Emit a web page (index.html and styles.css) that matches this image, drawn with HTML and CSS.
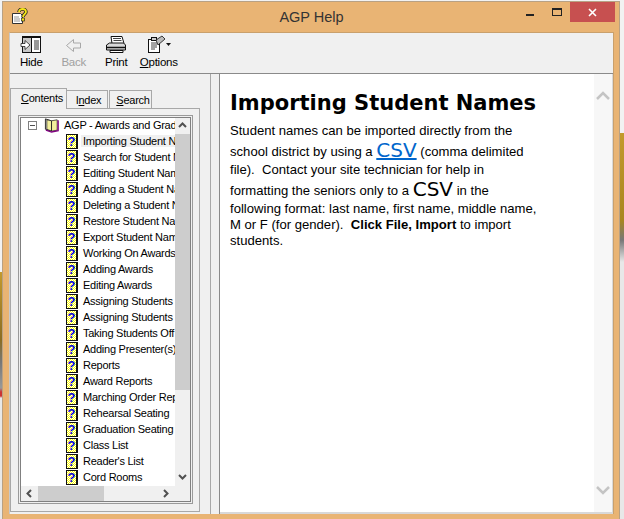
FILE: index.html
```html
<!DOCTYPE html>
<html lang="en">
<head>
    <meta charset="UTF-8">
    <title>AGP Help</title>
    <link rel="stylesheet" href="styles.css">
</head>
<body>
    <div class="window">
        <div class="titlebar">
            <div class="title-left">
                <svg class="app-icon" width="16" height="16" viewBox="0 0 16 16">
                    <path d="M.5 5.500h8l2 2v8H.5z" fill="#fff" stroke="#333"/>
                    <path d="M2 9h5M2 11h6M2 13h6" stroke="#999"/>
                    <path d="M7 4c0-4 7-4 7 0 0 2-3 2-3 5" fill="none" stroke="#222" stroke-width="3.400"/>
                    <path d="M7 4c0-4 7-4 7 0 0 2-3 2-3 5" fill="none" stroke="#f5e616" stroke-width="1.800"/>
                    <rect x="9.500" y="10" width="3" height="3" fill="#f5e616" stroke="#222" stroke-width=".7"/>
                </svg>
            </div>
            <div class="title">AGP Help</div>
            <div class="title-right">
                <svg class="min-icon" width="8" height="2"><rect width="8" height="2" fill="#222"/></svg>
                <svg class="max-icon" width="10" height="8"><rect x=".5" y=".5" width="9" height="7" fill="none" stroke="#222"/><rect width="10" height="2" fill="#222"/></svg>
                <div class="close">
                    <svg width="9" height="9" viewBox="0 0 9 9"><path d="M1 1l7 7M8 1l-7 7" stroke="#fff" stroke-width="1.600"/></svg>
                </div>
            </div>
        </div>
        <div class="client">
            <div class="toolbar">
                <div class="tool">
                    <svg width="22" height="20" viewBox="0 0 22 20">
                        <rect x="2.500" y="1.500" width="18" height="16" fill="#fff" stroke="#111"/>
                        <rect x="2" y="1" width="19" height="2" fill="#111"/>
                        <rect x="3" y="3" width="8" height="14" fill="#c8c8c8"/>
                        <path d="M11.500 2v16" stroke="#111"/>
                        <path d="M14 6h5M14 8h5M14 10h5M14 12h5M14 14h5" stroke="#333"/>
                        <path d="M1 8.500h4V5.500l5 4.500-5 4.500v-3H1z" fill="#fff" stroke="#222" stroke-width=".8"/>
                    </svg>
                    <span>Hide</span>
                </div>
                <div class="tool disabled">
                    <svg width="22" height="20" viewBox="0 0 22 20">
                        <path d="M3.500 10.500l7-6v3.500h7v5h-7v3.500z" fill="none" stroke="#a8a8a8"/>
                    </svg>
                    <span>Back</span>
                </div>
                <div class="tool">
                    <svg width="22" height="20" viewBox="0 0 22 20">
                        <path d="M6 1.500h11l2 7H7z" fill="#fff" stroke="#111"/>
                        <path d="M8 3.500h8M8.500 5.500h8" stroke="#444"/>
                        <path d="M1.500 10l3-2h14l2 2v5h-19z" fill="#d8d8d8" stroke="#111"/>
                        <path d="M2 12.500h18" stroke="#111" stroke-width="1.500"/>
                        <path d="M5 15.500h13v2H5z" fill="#fff" stroke="#111"/>
                    </svg>
                    <span>Print</span>
                </div>
                <div class="tool">
                    <svg width="26" height="20" viewBox="0 0 26 20">
                        <rect x="2.500" y="4.500" width="11" height="13" fill="#fff" stroke="#111"/>
                        <rect x="5.500" y="2.500" width="5" height="3" fill="#ccc" stroke="#111"/>
                        <path d="M5 8h6M5 10h6M5 12h6M5 14h4" stroke="#444"/>
                        <path d="M10 5l6-4 3 3-7 6z" fill="#bbb" stroke="#111" stroke-width=".8"/>
                        <path d="M20 8h5l-2.500 3z" fill="#111"/>
                    </svg>
                    <span><u>O</u>ptions</span>
                </div>
            </div>
            <div class="panes">
                <div class="nav">
                    <div class="tabs">
                        <div class="tab active"><u>C</u>ontents</div>
                        <div class="tab index">I<u>n</u>dex</div>
                        <div class="tab search"><u>S</u>earch</div>
                    </div>
                    <div class="tab-body">
                        <div class="tree">
                            <div class="tree-view">
                                <div class="tree-list">
                                    <div class="tree-root">
                                        <span class="minus"></span>
                                        <svg class="book" width="16" height="16" viewBox="0 0 17 16">
                                            <path d="M1.500 1.500l6 2v11l-6-2z" fill="#fff" stroke="#222"/>
                                            <path d="M3 2.500v10l5 2 6-1v-11l-6 1z" fill="#f3ef9c" stroke="#222" stroke-width=".8"/>
                                            <path d="M8 3.500v11" stroke="#222"/>
                                            <path d="M2 13.500l6 2 7-1.500V3" fill="none" stroke="#800080" stroke-width="1.500"/>
                                        </svg>
                                        <span class="label">AGP - Awards and Graduation</span>
                                    </div>
                                    <div class="item selected"><span class="page">?</span><span class="label">Importing Student Names</span></div>
                                    <div class="item"><span class="page">?</span><span class="label">Search for Student Names</span></div>
                                    <div class="item"><span class="page">?</span><span class="label">Editing Student Names</span></div>
                                    <div class="item"><span class="page">?</span><span class="label">Adding a Student Name</span></div>
                                    <div class="item"><span class="page">?</span><span class="label">Deleting a Student Name</span></div>
                                    <div class="item"><span class="page">?</span><span class="label">Restore Student Names</span></div>
                                    <div class="item"><span class="page">?</span><span class="label">Export Student Names</span></div>
                                    <div class="item"><span class="page">?</span><span class="label">Working On Awards</span></div>
                                    <div class="item"><span class="page">?</span><span class="label">Adding Awards</span></div>
                                    <div class="item"><span class="page">?</span><span class="label">Editing Awards</span></div>
                                    <div class="item"><span class="page">?</span><span class="label">Assigning Students</span></div>
                                    <div class="item"><span class="page">?</span><span class="label">Assigning Students</span></div>
                                    <div class="item"><span class="page">?</span><span class="label">Taking Students Off</span></div>
                                    <div class="item"><span class="page">?</span><span class="label">Adding Presenter(s)</span></div>
                                    <div class="item"><span class="page">?</span><span class="label">Reports</span></div>
                                    <div class="item"><span class="page">?</span><span class="label">Award Reports</span></div>
                                    <div class="item"><span class="page">?</span><span class="label">Marching Order Report</span></div>
                                    <div class="item"><span class="page">?</span><span class="label">Rehearsal Seating</span></div>
                                    <div class="item"><span class="page">?</span><span class="label">Graduation Seating</span></div>
                                    <div class="item"><span class="page">?</span><span class="label">Class List</span></div>
                                    <div class="item"><span class="page">?</span><span class="label">Reader's List</span></div>
                                    <div class="item"><span class="page">?</span><span class="label">Cord Rooms</span></div>
                                </div>
                                <div class="vscroll">
                                    <svg class="arrow" width="9" height="6" viewBox="0 0 9 6"><path d="M1 5l3.500-3.500L8 5" fill="none" stroke="#505050" stroke-width="2"/></svg>
                                    <div class="vthumb"></div>
                                    <svg class="arrow" width="9" height="6" viewBox="0 0 9 6"><path d="M1 1l3.500 3.500L8 1" fill="none" stroke="#505050" stroke-width="2"/></svg>
                                </div>
                            </div>
                            <div class="hscroll">
                                <svg width="6" height="9" viewBox="0 0 6 9"><path d="M5 1L1.500 4.500 5 8" fill="none" stroke="#505050" stroke-width="2"/></svg>
                                <div class="htrack"><div class="hthumb"></div></div>
                                <svg width="6" height="9" viewBox="0 0 6 9"><path d="M1 1l3.500 3.500L1 8" fill="none" stroke="#505050" stroke-width="2"/></svg>
                            </div>
                        </div>
                    </div>
                </div>
                <div class="splitter"></div>
                <div class="topic">
                    <div class="topic-text">
                        <h1>Importing Student Names</h1>
                        <p>Student names can be imported directly from the school district by using a <a class="big link">CSV</a> (comma delimited file).&nbsp; Contact your site technician for help in formatting the seniors only to a <span class="big">CSV</span> in the following format: last name, first name, middle name, M or F (for gender).&nbsp; <b>Click File, Import</b> to import students.</p>
                    </div>
                    <div class="topic-scroll">
                        <svg width="14" height="9" viewBox="0 0 14 9"><path d="M1 8l6-6 6 6" fill="none" stroke="#c4c4c4" stroke-width="2.500"/></svg>
                        <svg width="14" height="9" viewBox="0 0 14 9"><path d="M1 1l6 6 6-6" fill="none" stroke="#c4c4c4" stroke-width="2.500"/></svg>
                    </div>
                </div>
            </div>
        </div>
    </div>
</body>
</html>
```

FILE: styles.css
```css
* {
    box-sizing: border-box;
}
html, body {
    height: 100%;
}
body {
    margin: 0;
    padding: 1px 4px 0 2px;
    background:
        linear-gradient(#f2f2f2 272px, #c39a2c 272px, #8a6d22 340px, #777 362px, #999 388px, #c33 392px, #c33 396px, #e8e8e8 398px) left / 2px 100% no-repeat,
        linear-gradient(#f2f2f2 133px, #c39a2c 133px, #a8861f 220px, #777 240px, #e8e8e8 262px) right / 4px 100% no-repeat,
        #f2f2f2;
    color: #000;
    font-family: 'Liberation Sans', Arial, sans-serif;
    font-size: 11px;
    letter-spacing: -0.25px;
    overflow: hidden;
}
.window {
    height: 518px;
    display: flex;
    flex-direction: column;
    padding: 0 5px 5px 6px;
    background-color: #e9b474;
    border: 1px solid #b8a184;
    border-bottom: 0;
}
.titlebar {
    height: 30px;
    flex: none;
    display: grid;
    grid-template-columns: 1fr auto 1fr;
}
.title-left {
    padding: 6px 0 0 3px;
}
.title {
    padding-top: 7px;
    font-size: 14.500px;
    letter-spacing: 0;
    color: #333;
}
.title-right {
    display: flex;
    justify-content: flex-end;
    align-items: flex-start;
    margin-right: -1px;
}
.min-icon {
    margin: 12px 18px 0 0;
}
.max-icon {
    margin: 6px 8px 0 0;
}
.close {
    width: 45px;
    height: 20px;
    display: flex;
    align-items: center;
    justify-content: center;
    background-color: #c75050;
}
.client {
    flex: 1;
    min-height: 0;
    display: flex;
    flex-direction: column;
    background-color: #f0f0f0;
    border-top: 1px solid #c9a06c;
    border-left: 1px solid #c8c8c8;
    border-right: 1px solid #c9a06c;
}
.toolbar {
    height: 41px;
    flex: none;
    display: flex;
    padding-top: 2px;
    border-bottom: 1px solid #8a8a8a;
}
.tool {
    width: 42.500px;
    display: flex;
    flex-direction: column;
    align-items: center;
    font-size: 11.500px;
    line-height: 14px;
}
.disabled {
    color: #a0a0a0;
}
.panes {
    flex: 1;
    min-height: 0;
    display: flex;
}
.nav {
    width: 200px;
    flex: none;
    padding: 14px 10px 2px 0;
    display: flex;
    flex-direction: column;
}
.tabs {
    display: flex;
    align-items: flex-start;
    height: 20px;
    flex: none;
    position: relative;
    z-index: 1;
}
.tab {
    height: 18px;
    margin-top: 2px;
    padding-top: 2px;
    border: 1px solid #a8a8a8;
    border-bottom: 0;
    font-size: 11px;
    line-height: 14px;
    text-align: center;
}
.tab.active {
    width: 57px;
    height: 21px;
    margin-top: 0;
    padding-left: 7px;
    background-color: #f0f0f0;
}
.tab.index {
    width: 41px;
    padding-left: 3px;
    border-left: 0;
}
.tab.search {
    width: 43px;
    margin-left: 1px;
    padding-left: 5px;
}
.tab-body {
    flex: 1;
    min-height: 0;
    padding: 6px 6px 7px 7px;
    border: 1px solid #a8a8a8;
}
.tree {
    height: 100%;
    display: flex;
    flex-direction: column;
    padding: 3px;
    box-shadow: inset 0 0 0 1px #9a9a9a, inset 0 0 0 2px #f0f0f0, inset 0 0 0 3px #808080;
}
.tree-view {
    flex: 1;
    min-height: 0;
    display: flex;
}
.tree-list {
    flex: 1;
    min-width: 0;
    background-color: #fff;
    overflow: hidden;
}
.tree-root, .item {
    height: 16px;
    display: flex;
    align-items: center;
    white-space: nowrap;
}
.tree-root {
    height: 15px;
    padding-bottom: 1px;
}
.minus {
    width: 9px;
    height: 9px;
    flex: none;
    margin: 0 7px;
    border: 1px solid #808080;
    background: linear-gradient(#505050, #505050) center / 5px 1px no-repeat;
}
.book {
    flex: none;
    margin-right: 2px;
}
.item {
    padding-left: 45px;
}
.page {
    width: 12px;
    height: 15px;
    flex: none;
    margin-right: 3px;
    border: 1px solid #111;
    border-right-width: 2px;
    background: repeating-conic-gradient(#ffff00 0 25%, #fff 0 50%) 0 0 / 2px 2px;
    color: #0000e0;
    font-weight: bold;
    font-size: 13px;
    letter-spacing: 0;
    line-height: 13px;
    text-align: center;
}
.label {
    padding: 0 2px;
}
.selected .label {
    background-color: #f0f0f0;
}
.vscroll {
    width: 15px;
    flex: none;
    display: flex;
    flex-direction: column;
    align-items: center;
    padding: 4px 0 6px;
}
.vthumb {
    width: 15px;
    height: 256px;
    margin-top: 6px;
    flex: none;
    background-color: #cdcdcd;
}
.vscroll .arrow:last-child {
    margin-top: auto;
}
.hscroll {
    height: 15px;
    flex: none;
    display: flex;
    align-items: center;
    padding: 0 21px 0 5px;
}
.htrack {
    flex: 1;
    height: 15px;
    padding-left: 6px;
}
.hthumb {
    width: 66px;
    height: 15px;
    background-color: #cdcdcd;
}
.splitter {
    width: 10px;
    flex: none;
    border-left: 1px solid #a8a8a8;
    border-right: 1px solid #8a8a8a;
}
.topic {
    flex: 1;
    min-width: 0;
    display: flex;
    background-color: #fff;
    border-bottom: 2px solid #d8d8d8;
    border-right: 1px solid #d8d8d8;
}
.topic-text {
    flex: 1;
    padding: 16px 0 0 10px;
    letter-spacing: 0;
}
.topic-text h1 {
    margin: 0 0 7px;
    font-family: 'DejaVu Sans', Verdana, sans-serif;
    font-size: 21px;
    line-height: 26px;
}
.topic-text p {
    margin: 0;
    width: 308px;
    font-size: 13.100px;
    line-height: 16px;
}
.big {
    font-family: 'DejaVu Sans', Verdana, sans-serif;
    font-size: 20px;
    line-height: 23px;
    vertical-align: -1px;
}
.link {
    color: #0066cc;
    text-decoration: underline;
}
.topic-scroll {
    width: 18px;
    flex: none;
    display: flex;
    flex-direction: column;
    justify-content: space-between;
    align-items: center;
    padding: 17px 0 17px;
    background-color: #f7f7f7;
}
```
